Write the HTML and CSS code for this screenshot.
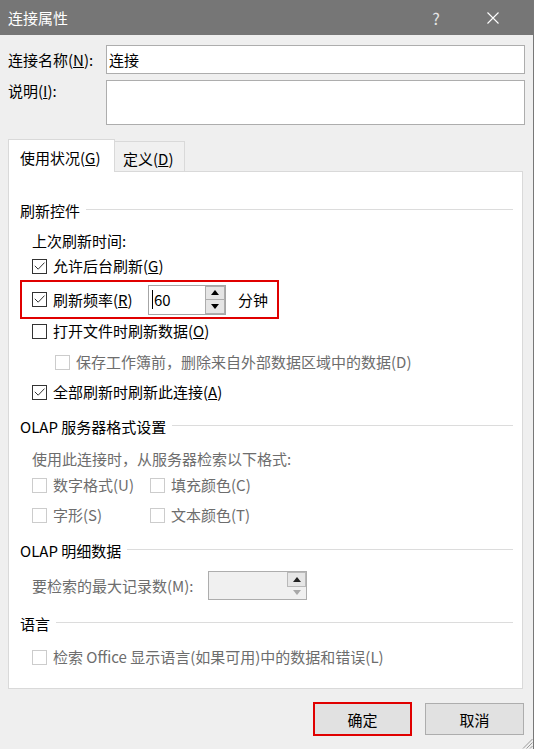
FILE: index.html
```html
<!DOCTYPE html>
<html lang="zh-CN">
<head>
<meta charset="utf-8">
<title>连接属性</title>
<link rel="stylesheet" href="styles.css">
</head>
<body>
<div class="window">
  <div class="titlebar">
    <span class="title">连接属性</span>
    <span class="cap help">?</span>
    <span class="cap close"><svg width="12" height="12" viewBox="0 0 12 12"><path d="M0.5 0.5 L11.5 11.5 M11.5 0.5 L0.5 11.5" stroke="#ffffff" stroke-width="1.1" fill="none"/></svg></span>
  </div>
  <div class="content">
    <div class="field">
      <label>连接名称(<u>N</u>):</label>
      <div class="input">连接</div>
    </div>
    <div class="field desc">
      <label>说明(<u>I</u>):</label>
      <div class="textarea"></div>
    </div>
    <div class="tabs">
      <div class="tab active">使用状况(<u>G</u>)</div>
      <div class="tab">定义(<u>D</u>)</div>
    </div>
    <div class="panel">
      <div class="hdr">刷新控件</div>
      <div class="row m10">上次刷新时间:</div>
      <div class="row m5"><span class="cb"><svg width="13" height="13" viewBox="0 0 13 13"><path d="M1.8 5.8 L5.2 9.2 L11.5 2.6" stroke="#333" stroke-width="1" fill="none"/></svg></span>允许后台刷新(<u>G</u>)</div>
      <div class="redbox">
        <span class="cb"><svg width="13" height="13" viewBox="0 0 13 13"><path d="M1.8 5.8 L5.2 9.2 L11.5 2.6" stroke="#333" stroke-width="1" fill="none"/></svg></span>
        <span class="rlabel">刷新频率(<u>R</u>)</span>
        <div class="spin">
          <div class="spin-val"><span class="caret"></span>60</div>
          <div class="spin-btns">
            <span class="sbtn"><svg width="8" height="5" viewBox="0 0 8 5"><path d="M0 5 L4 0 L8 5 Z" fill="#000"/></svg></span>
            <span class="sbtn"><svg width="8" height="5" viewBox="0 0 8 5"><path d="M0 0 L4 5 L8 0 Z" fill="#000"/></svg></span>
          </div>
        </div>
        <span class="unit">分钟</span>
      </div>
      <div class="row m2"><span class="cb"></span>打开文件时刷新数据(<u>O</u>)</div>
      <div class="row sub dis m11"><span class="cb"></span>保存工作簿前，删除来自外部数据区域中的数据(D)</div>
      <div class="row m10"><span class="cb"><svg width="13" height="13" viewBox="0 0 13 13"><path d="M1.8 5.8 L5.2 9.2 L11.5 2.6" stroke="#333" stroke-width="1" fill="none"/></svg></span>全部刷新时刷新此连接(<u>A</u>)</div>

      <div class="hdr m15">OLAP 服务器格式设置</div>
      <div class="row dis m12">使用此连接时，从服务器检索以下格式:</div>
      <div class="grid m6">
        <div class="item dis"><span class="cb"></span>数字格式(U)</div>
        <div class="item dis"><span class="cb"></span>填充颜色(C)</div>
      </div>
      <div class="grid m10">
        <div class="item dis"><span class="cb"></span>字形(S)</div>
        <div class="item dis"><span class="cb"></span>文本颜色(T)</div>
      </div>

      <div class="hdr m16">OLAP 明细数据</div>
      <div class="row tall dis m10">
        <span class="mlabel">要检索的最大记录数(M):</span>
        <div class="spin disabled">
          <div class="spin-val"></div>
          <div class="spin-btns">
            <span class="sbtn up"><svg width="8" height="5" viewBox="0 0 8 5"><path d="M0 5 L4 0 L8 5 Z" fill="#222"/></svg></span>
            <span class="sbtn down"><svg width="8" height="5" viewBox="0 0 8 5"><path d="M0 0 L4 5 L8 0 Z" fill="#a8a8a8"/></svg></span>
          </div>
        </div>
      </div>

      <div class="hdr m14">语言</div>
      <div class="row dis m13"><span class="cb"></span>检索 Office 显示语言(如果可用)中的数据和错误(L)</div>
    </div>
    <div class="buttons">
      <button class="btn ok">确定</button>
      <button class="btn">取消</button>
    </div>
  </div>
  <svg class="grip" width="11" height="11" viewBox="0 0 11 11"><path d="M10.5 1 L1 10.5 M10.5 4.5 L4.5 10.5 M10.5 8 L8 10.5" stroke="#9a9a9a" stroke-width="1" fill="none"/></svg>
</div>
</body>
</html>
```
FILE: styles.css
```css
* { box-sizing: border-box; }
html, body { margin: 0; padding: 0; }
body {
  background: #efefef;
  font-family: "Noto Sans CJK SC", sans-serif;
  font-size: 15px;
  color: #000;
}
.window {
  position: relative;
  width: 534px;
  height: 749px;
  background: #efefef;
  border-right: 1px solid #777;
  overflow: hidden;
}
.titlebar {
  height: 35px;
  background: #767676;
  display: flex;
  align-items: center;
  color: #fff;
  padding-left: 8px;
}
.title { flex: 1; font-size: 15px; line-height: 20px; }
.cap {
  width: 46px;
  height: 35px;
  display: flex;
  align-items: center;
  justify-content: center;
}
.help { font-size: 16px; color: #e6e6e6; }
.close { margin-left: 11px; margin-right: 17px; }

.content { padding: 10px 8px 0 8px; }
.field { display: flex; align-items: center; }
.field label { width: 98px; line-height: 20px; flex: none; }
.input {
  flex: 1;
  height: 29px;
  background: #fff;
  border: 1px solid #adadad;
  padding-left: 2px;
  line-height: 27px;
}
.field.desc { margin-top: 6px; align-items: flex-start; }
.field.desc label { padding-top: 1px; }
.textarea {
  flex: 1;
  height: 45px;
  background: #fff;
  border: 1px solid #adadad;
}

.tabs {
  display: flex;
  align-items: flex-end;
  margin-top: 14px;
  height: 32px;
}
.tab {
  height: 30px;
  width: 70px;
  border: 1px solid #d9d9d9;
  border-left: none;
  border-bottom: none;
  background: #f0f0f0;
  padding: 7px 0 0 8px;
  line-height: 20px;
}
.tab.active {
  height: 33px;
  width: 107px;
  margin-bottom: -1px;
  background: #fff;
  border-left: 1px solid #d9d9d9;
  padding: 8px 0 0 11px;
  position: relative;
  z-index: 1;
}

.panel {
  width: 515px;
  background: #fff;
  border: 1px solid #d9d9d9;
  padding: 29px 9px 21px 11px;
}
.hdr {
  display: flex;
  align-items: center;
  height: 20px;
  line-height: 20px;
  white-space: nowrap;
}
.hdr::after {
  content: "";
  flex: 1;
  height: 1px;
  background: #dcdcdc;
  margin-left: 6px;
  position: relative;
  top: -2px;
}
.row {
  display: flex;
  align-items: center;
  height: 20px;
  line-height: 20px;
  margin-left: 12px;
  white-space: nowrap;
}
.row.sub { margin-left: 35px; }
.row.tall { height: 29px; }
.cb {
  width: 15px;
  height: 15px;
  border: 1px solid #333;
  background: #fff;
  margin-right: 6px;
  flex: none;
  display: flex;
}
.dis { color: #6d6d6d; }
.dis .cb { border-color: #cccccc; }

.grid {
  display: grid;
  grid-template-columns: 118px auto;
  margin-left: 12px;
  height: 20px;
}
.item { display: flex; align-items: center; line-height: 20px; white-space: nowrap; }

.redbox {
  margin-top: 4px;
  width: 259px;
  height: 39px;
  border: 2px solid #e00000;
  padding-left: 10px;
  display: flex;
  align-items: center;
  white-space: nowrap;
}
.rlabel { width: 95px; flex: none; }
.spin {
  width: 78px;
  height: 30px;
  border: 1px solid #a6a6a6;
  background: #fff;
  display: flex;
  flex: none;
}
.spin-val {
  flex: 1;
  display: flex;
  align-items: center;
  padding-left: 3px;
  line-height: 20px;
}
.caret {
  width: 1px;
  height: 19px;
  background: #000;
  margin-right: 1px;
}
.spin-btns {
  width: 20px;
  display: flex;
  flex-direction: column;
}
.sbtn {
  flex: 1;
  display: flex;
  align-items: center;
  justify-content: center;
  background: #e5e5e5;
  border: 1px solid #adadad;
}
.sbtn + .sbtn { border-top: none; }
.unit { margin-left: 12px; }

.mlabel { width: 176px; flex: none; }
.spin.disabled {
  width: 99px;
  height: 29px;
  background: #f0f0f0;
  border-color: #adadad;
}
.spin.disabled .spin-btns { width: 19px; }
.spin.disabled .sbtn.up { background: #e6e6e6; border-color: #b9b9b9; }
.spin.disabled .sbtn.down { background: #f0f0f0; border: none; }

.m2 { margin-top: 2px; }
.m5 { margin-top: 5px; }
.m6 { margin-top: 6px; }
.m10 { margin-top: 10px; }
.m11 { margin-top: 11px; }
.m12 { margin-top: 12px; }
.m13 { margin-top: 13px; }
.m14 { margin-top: 14px; }
.m15 { margin-top: 15px; }
.m16 { margin-top: 16px; }

.buttons {
  display: flex;
  justify-content: flex-end;
  align-items: center;
  gap: 13px;
  margin-top: 13px;
  padding-right: 1px;
}
.btn {
  width: 99px;
  height: 32px;
  background: #e1e1e1;
  border: 1px solid #adadad;
  font-family: inherit;
  font-size: 15px;
  color: #000;
  padding: 0;
}
.btn.ok { height: 34px; border: 2px solid #e00000; }
.grip { position: absolute; right: 0; bottom: 0; }
```
